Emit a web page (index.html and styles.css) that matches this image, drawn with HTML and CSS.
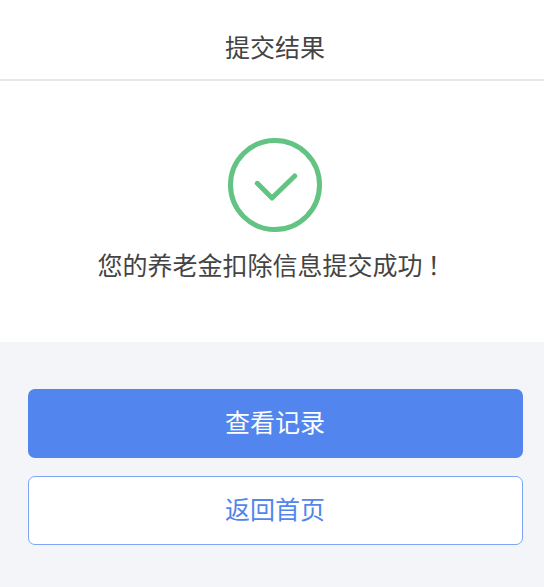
FILE: index.html
```html
<!DOCTYPE html>
<html lang="zh-CN">
<head>
    <meta charset="UTF-8">
    <meta name="viewport" content="width=device-width, initial-scale=1.0">
    <title>提交结果</title>
    <link rel="stylesheet" href="styles.css">
</head>
<body>

<div class="navbar">提交结果</div>

<!-- Result -->
<div class="result">
    <svg class="result-icon" width="94" height="94" viewBox="0 0 94 94">
        <circle cx="47" cy="47" r="44.5" fill="none" stroke="#62c383" stroke-width="5"/>
        <path d="M29.3 45.3 L44 60 L66.7 38" fill="none" stroke="#62c383" stroke-width="5" stroke-linecap="round" stroke-linejoin="round"/>
    </svg>
    <p class="result-text">您的养老金扣除信息提交成功<span class="result-mark">！</span></p>
</div>

<!-- Actions -->
<div class="actions">
    <button class="btn btn-primary">查看记录</button>
    <button class="btn btn-outline">返回首页</button>
</div>

</body>
</html>
```

FILE: styles.css
```css
body {
    margin: 0;
    padding: 0;
    min-height: 587px;
    box-sizing: border-box;
    background-color: #f3f5f9;
    font-family: "Noto Sans CJK SC", "Liberation Sans", sans-serif;
}

.navbar {
    height: 81px;
    line-height: 92px;
    box-sizing: border-box;
    padding-left: 6px;
    background-color: #fff;
    border-bottom: 2px solid #e8e8e8;
    text-align: center;
    font-size: 25px;
    color: #444;
}

.result {
    display: flex;
    flex-direction: column;
    align-items: center;
    height: 261px;
    padding: 57px 0 0 6px;
    box-sizing: border-box;
    background-color: #fff;
}

.result-icon {
    display: block;
}

.result-text {
    margin: 10px 0 0;
    font-size: 25px;
    line-height: 44px;
    color: #444;
}

.result-mark {
    margin-left: 5px;
}

.actions {
    display: flex;
    flex-direction: column;
    gap: 18px;
    padding: 47px 21px 0 28px;
}

.btn {
    display: block;
    width: 100%;
    height: 69px;
    padding: 0 1px 6px 0;
    border-radius: 7px;
    font-family: inherit;
    font-size: 25px;
}

.btn-primary {
    background-color: #5285ee;
    border: none;
    color: #fff;
}

.btn-outline {
    background-color: #fff;
    border: 1px solid #7da4f5;
    color: #5285ee;
}
```
